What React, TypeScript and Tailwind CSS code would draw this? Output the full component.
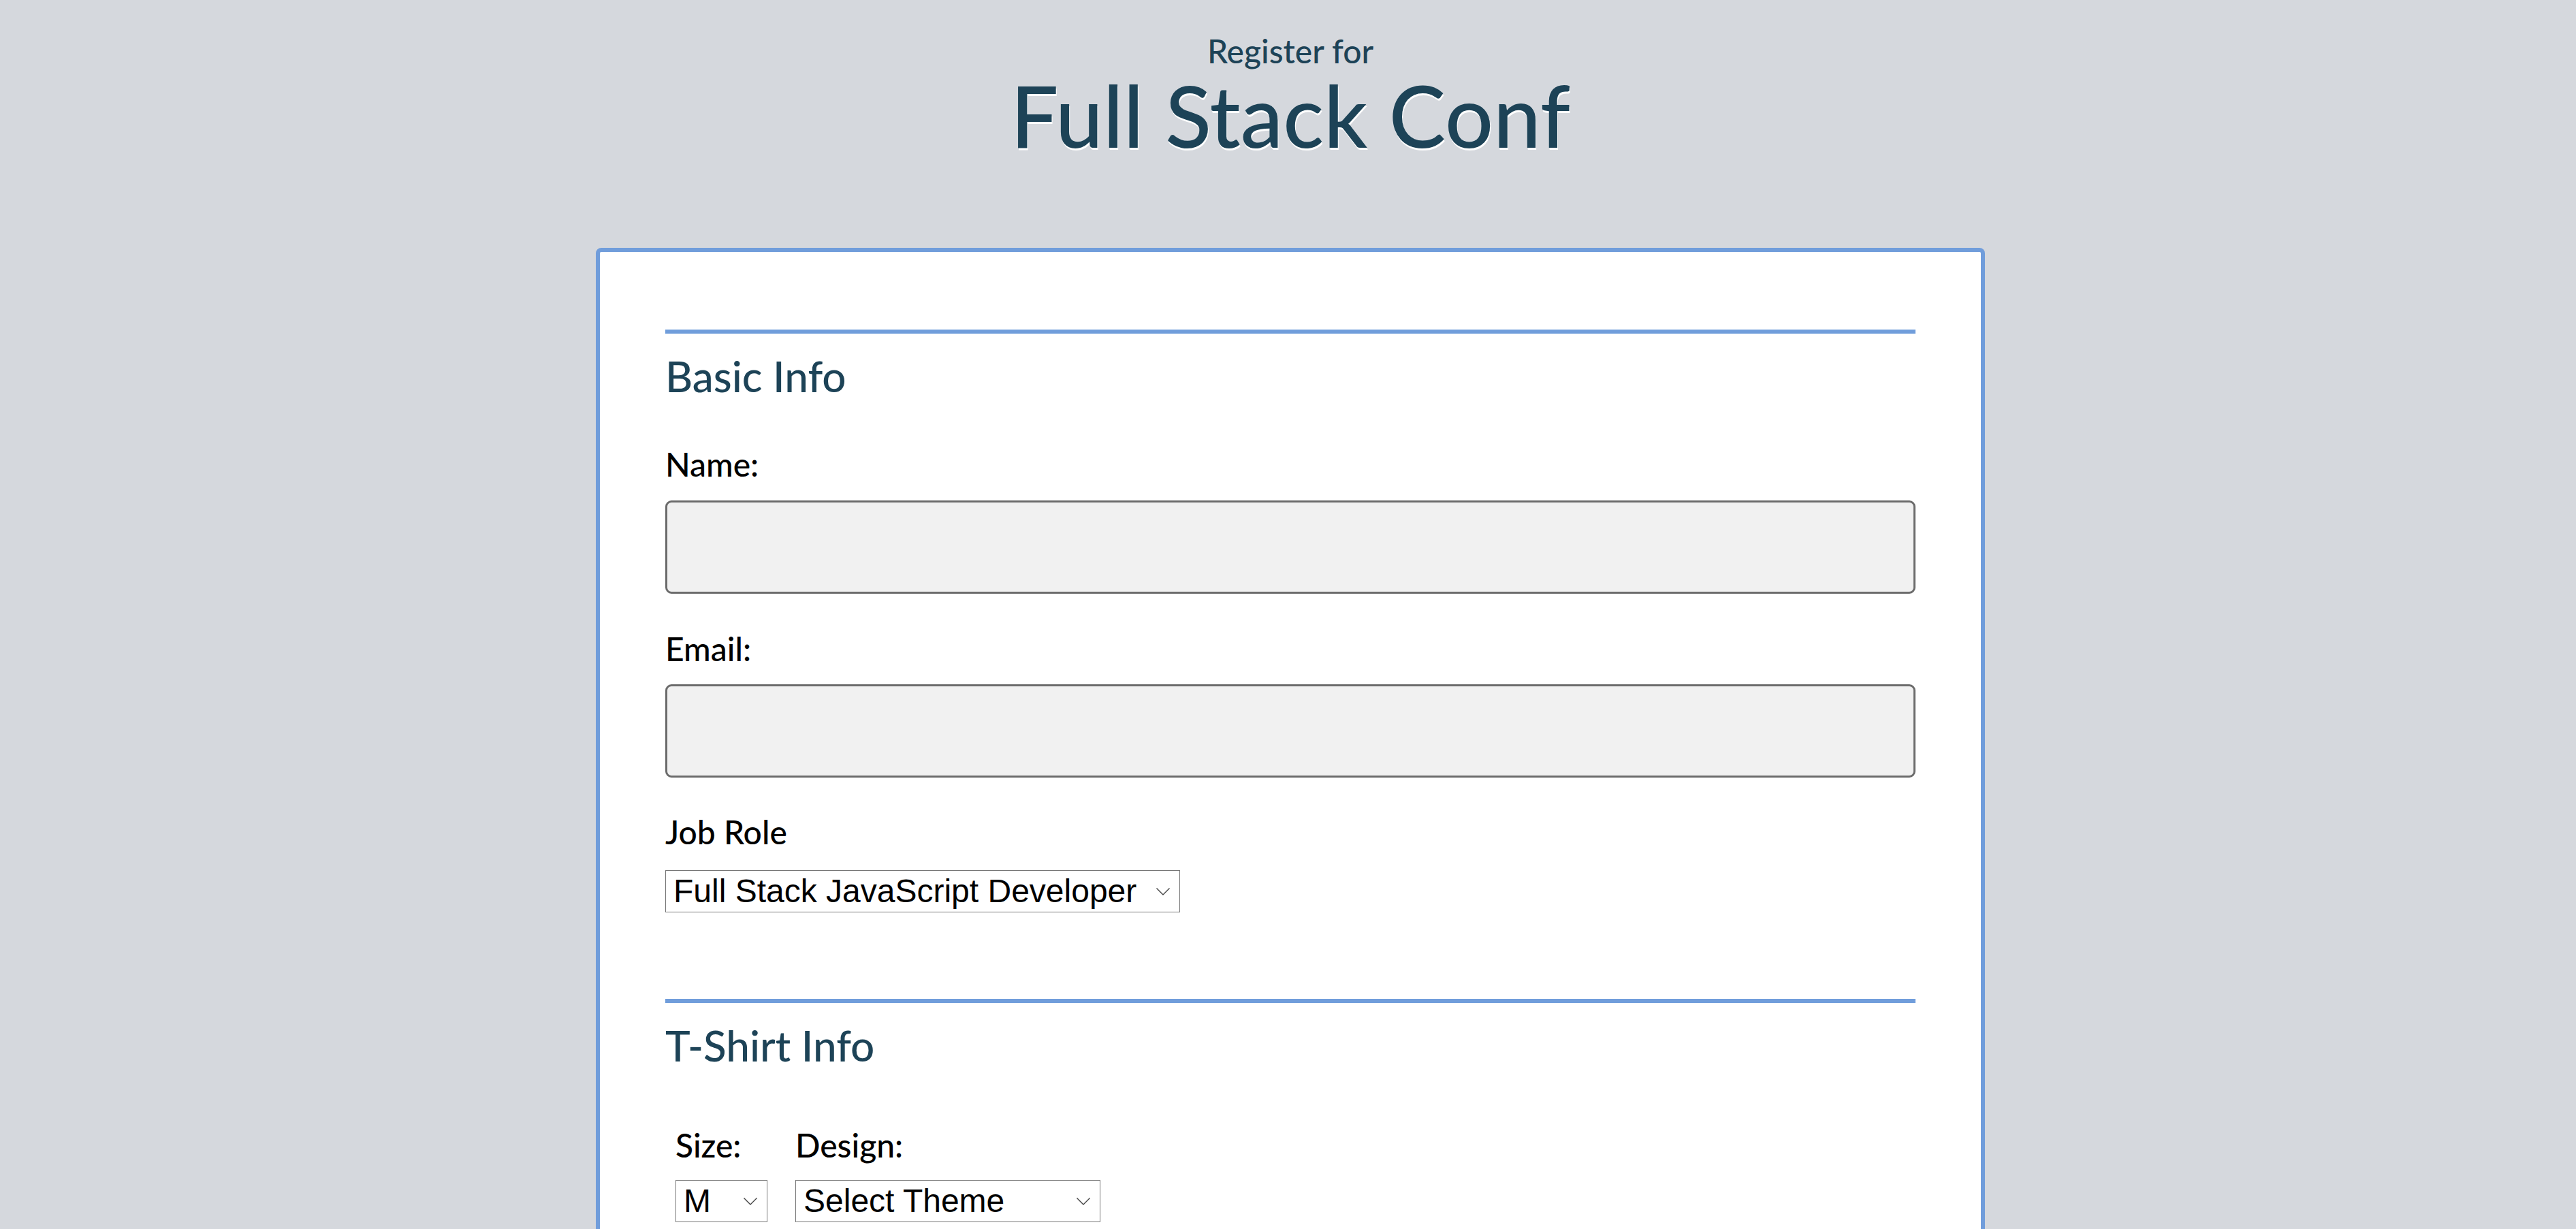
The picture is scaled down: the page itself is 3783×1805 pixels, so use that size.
const sans = "font-['Lato','Noto_Sans',sans-serif]";

function Select({ value, options, width }: { value: string; options: string[]; width: string }) {
  return (
    <div className={`relative ${width}`}>
      <select
        defaultValue={value}
        className="h-[62px] w-full appearance-none border border-[#767676] bg-white pl-[11px] pr-[50px] font-['Liberation_Sans',Arial,sans-serif] text-[48px] leading-[1.15] text-black outline-none"
      >
        {options.map((o) => (
          <option key={o}>{o}</option>
        ))}
      </select>
      <svg
        viewBox="0 0 20 11"
        className="pointer-events-none absolute right-[15px] top-[26px] h-[11px] w-[20px]"
        fill="none"
        stroke="#444"
        strokeWidth="1.4"
      >
        <path d="M0.5 0.5 L10 10 L19.5 0.5" />
      </svg>
    </div>
  );
}

function Label({ children, className = '' }: { children: string; className?: string }) {
  return <label className={`block text-[48px] font-medium leading-[1.2] text-black ${className}`}>{children}</label>;
}

function SectionHead({ children, className = '' }: { children: string; className?: string }) {
  return (
    <div className={className}>
      <div className="h-[6px] bg-[#709ddb]" />
      <h2 className="mt-[25px] text-[62px] font-medium leading-[1.2] text-[#1d4357]">{children}</h2>
    </div>
  );
}

export default function App() {
  return (
    <div className={`min-h-screen bg-[#d5d8dd] pl-[7px] ${sans}`}>
      <header className="pt-[46px] text-center text-[#1d4357]">
        <p className="text-[48px] font-medium leading-[1.2]">Register for</p>
        <h1 className="mt-[3px] text-[125px] font-medium leading-none [text-shadow:1px_3px_0_#fff]">Full Stack Conf</h1>
      </header>

      <form className="mx-auto mt-[132px] w-[2040px] rounded-[8px] border-[6px] border-[#709ddb] bg-white px-[96px] pb-[400px] pt-[114px]">
        <SectionHead>Basic Info</SectionHead>

        <Label className="mt-[64px]">Name:</Label>
        <input
          type="text"
          className="mt-[24px] block h-[137px] w-full rounded-[9px] border-[3px] border-[#6b6b6b] bg-[#f1f1f1] px-4 text-[48px] outline-none"
        />

        <Label className="mt-[52px]">Email:</Label>
        <input
          type="email"
          className="mt-[24px] block h-[137px] w-full rounded-[9px] border-[3px] border-[#6b6b6b] bg-[#f1f1f1] px-4 text-[48px] outline-none"
        />

        <Label className="mt-[51px]">Job Role</Label>
        <div className="mt-[27px]">
          <Select
            value="Full Stack JavaScript Developer"
            width="w-[756px]"
            options={['Full Stack JavaScript Developer', 'Front End Developer', 'Back End Developer', 'Designer', 'Student', 'Other']}
          />
        </div>

        <SectionHead className="mt-[127px]">T-Shirt Info</SectionHead>

        <div className="mt-[81px] flex gap-[41px] pl-[15px]">
          <div>
            <Label>Size:</Label>
            <div className="mt-[22px]">
              <Select value="M" width="w-[135px]" options={['S', 'M', 'L', 'XL']} />
            </div>
          </div>
          <div>
            <Label>Design:</Label>
            <div className="mt-[22px]">
              <Select value="Select Theme" width="w-[448px]" options={['Select Theme', 'Theme - JS Puns', 'Theme - I ♥ JS']} />
            </div>
          </div>
        </div>
      </form>
    </div>
  );
}
